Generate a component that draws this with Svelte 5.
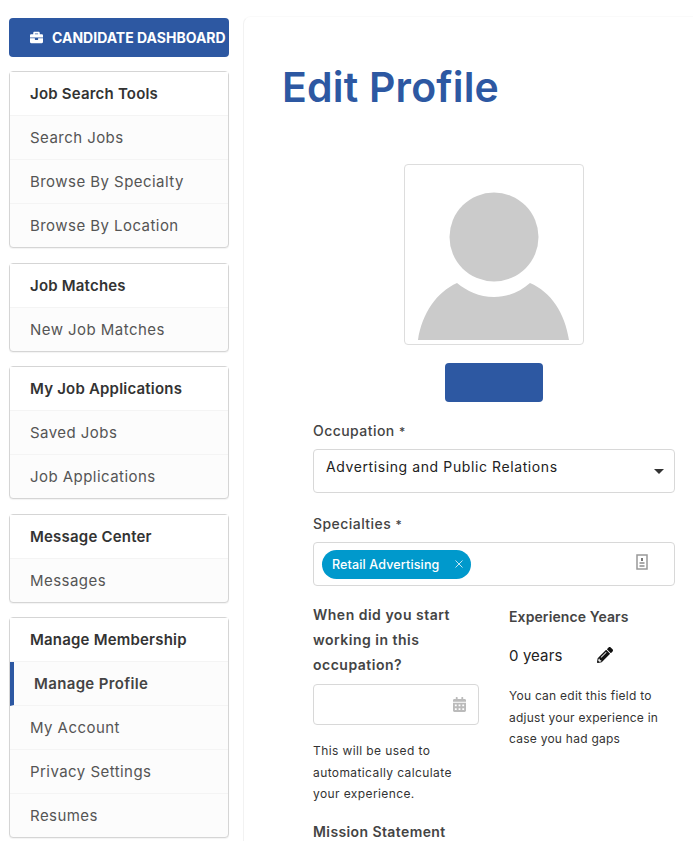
<script>
  const groups = [
    { title: "Job Search Tools", links: ["Search Jobs", "Browse By Specialty", "Browse By Location"] },
    { title: "Job Matches", links: ["New Job Matches"] },
    { title: "My Job Applications", links: ["Saved Jobs", "Job Applications"] },
    { title: "Message Center", links: ["Messages"] },
    { title: "Manage Membership", links: ["Manage Profile", "My Account", "Privacy Settings", "Resumes"] }
  ];
</script>

<div class="page">
  <aside class="sidebar">
    <a class="dash-btn" href="#dashboard">
      <svg class="case" viewBox="0 0 512 512" aria-hidden="true">
        <path fill="currentColor" d="M320 336c0 8.800-7.200 16-16 16h-96c-8.800 0-16-7.200-16-16v-48H0v144c0 25.600 22.400 48 48 48h416c25.600 0 48-22.400 48-48V288H320v48zm144-208h-80V80c0-25.600-22.400-48-48-48H176c-25.600 0-48 22.400-48 48v48H48c-25.600 0-48 22.400-48 48v80h512v-80c0-25.600-22.400-48-48-48zm-144 0H192V96h128v32z" />
      </svg>
      CANDIDATE DASHBOARD
    </a>

    {#each groups as group}
      <nav class="group">
        <div class="group-title">{group.title}</div>
        {#each group.links as link}
          <a class="link" class:active={link === "Manage Profile"} href="#link">{link}</a>
        {/each}
      </nav>
    {/each}
  </aside>

  <main class="content">
    <h1>Edit Profile</h1>

    <div class="photo-wrap">
      <div class="photo">
        <svg viewBox="0 0 178 178" width="178" height="178" aria-hidden="true">
          <circle cx="89" cy="72" r="44.500" fill="#cbcbcb" />
          <path fill="#cbcbcb" d="M13 175C17 148 32 127 52 118C62 126 74 132 89 132C104 132 116 126 125 118C146 127 160 148 164 175Z" />
        </svg>
      </div>
      <button class="upload" type="button" aria-label="Upload photo"></button>
    </div>

    <div class="form">
      <label class="label" for="occ">Occupation <span class="req">*</span></label>
      <div class="select" id="occ">
        <span>Advertising and Public Relations</span>
        <span class="caret"></span>
      </div>

      <div class="label spec-label">Specialties <span class="req">*</span></div>
      <div class="tags-input">
        <span class="chip">
          Retail Advertising
          <svg class="chip-x" viewBox="0 0 8 8" aria-hidden="true">
            <path fill="none" stroke="#c4e6f3" stroke-width="1" d="M0.500 0.500L7.500 7.500M7.500 0.500L0.500 7.500" />
          </svg>
        </span>
        <svg class="contact" viewBox="0 0 12 16" aria-hidden="true">
          <path fill="none" stroke="#999" stroke-width="1.500" d="M1 1h10v14H1z" />
          <path fill="#777" d="M5 4h2v3H5z" />
          <path fill="#aaa" d="M3.500 8h5v2h-5zM3.500 11h5v2h-5z" />
        </svg>
      </div>

      <div class="columns">
        <div class="col-left">
          <div class="q">When did you start working in this occupation?</div>
          <div class="date-input">
            <svg class="cal" viewBox="0 0 448 512" aria-hidden="true">
              <path fill="#bbb" d="M0 464c0 26.500 21.500 48 48 48h352c26.500 0 48-21.500 48-48V192H0v272zm320-196c0-6.600 5.400-12 12-12h40c6.600 0 12 5.400 12 12v40c0 6.600-5.400 12-12 12h-40c-6.600 0-12-5.400-12-12v-40zm0 128c0-6.600 5.400-12 12-12h40c6.600 0 12 5.400 12 12v40c0 6.600-5.400 12-12 12h-40c-6.600 0-12-5.400-12-12v-40zM192 268c0-6.600 5.400-12 12-12h40c6.600 0 12 5.400 12 12v40c0 6.600-5.400 12-12 12h-40c-6.600 0-12-5.400-12-12v-40zm0 128c0-6.600 5.400-12 12-12h40c6.600 0 12 5.400 12 12v40c0 6.600-5.400 12-12 12h-40c-6.600 0-12-5.400-12-12v-40zM64 268c0-6.600 5.400-12 12-12h40c6.600 0 12 5.400 12 12v40c0 6.600-5.400 12-12 12H76c-6.600 0-12-5.400-12-12v-40zm0 128c0-6.600 5.400-12 12-12h40c6.600 0 12 5.400 12 12v40c0 6.600-5.400 12-12 12H76c-6.600 0-12-5.400-12-12v-40zM400 64h-48V16c0-8.800-7.200-16-16-16h-32c-8.800 0-16 7.200-16 16v48H160V16c0-8.800-7.200-16-16-16h-32c-8.800 0-16 7.200-16 16v48H48C21.500 64 0 85.500 0 112v48h448v-48c0-26.500-21.500-48-48-48z" />
            </svg>
          </div>
          <p class="hint left-hint">This will be used to automatically calculate your experience.</p>
        </div>
        <div class="col-right">
          <div class="q exp">Experience Years</div>
          <div class="years">
            <span>0 years</span>
            <svg class="pencil" viewBox="0 0 512 512" aria-hidden="true">
              <path fill="#111" d="M497.900 142.100l-46.100 46.100c-4.700 4.700-12.300 4.700-17 0l-111-111c-4.700-4.700-4.700-12.300 0-17l46.100-46.100c18.700-18.700 49.100-18.700 67.900 0l60.100 60.100c18.800 18.700 18.800 49.100 0 67.900zM284.200 99.800L21.600 362.400.4 483.900c-2.900 16.400 11.400 30.600 27.800 27.800l121.500-21.300 262.600-262.600c4.700-4.700 4.700-12.300 0-17l-111-111c-4.800-4.700-12.400-4.700-17.100 0zM124.100 339.900c-5.500-5.500-5.500-14.300 0-19.800l154-154c5.500-5.500 14.300-5.500 19.800 0s5.500 14.300 0 19.800l-154 154c-5.500 5.500-14.300 5.500-19.800 0zM88 424h48v36.300l-64.500 11.300-31.100-31.100L51.700 376H88v48z" />
            </svg>
          </div>
          <p class="hint right-hint">You can edit this field to adjust your experience in case you had gaps</p>
        </div>
      </div>

      <div class="q mission">Mission Statement</div>
    </div>
  </main>
</div>

<style>
  :global(body) {
    margin: 0;
    background: #fff;
    font-family: "Inter", "Open Sans", sans-serif;
    color: #444;
  }

  .page {
    display: flex;
    height: 841px;
    overflow: hidden;
    padding-top: 18px;
    box-sizing: border-box;
  }

  .sidebar {
    width: 220px;
    margin-left: 9px;
    flex-shrink: 0;
  }

  .dash-btn {
    display: flex;
    align-items: center;
    height: 39px;
    padding-left: 21px;
    background: #2d58a2;
    border-radius: 4px;
    color: #fff;
    font-size: 14px;
    font-weight: 700;
    text-decoration: none;
    white-space: nowrap;
    margin-bottom: 14px;
  }

  .case {
    width: 13px;
    height: 13px;
    margin-right: 9px;
  }

  .group {
    display: flex;
    flex-direction: column;
    border: 1px solid #d5d5d5;
    border-radius: 4px;
    margin-bottom: 14.500px;
    background: #fcfcfc;
    box-shadow: 0 1px 1px rgba(0, 0, 0, 0.05);
  }

  .group-title {
    height: 44px;
    line-height: 44px;
    padding-left: 20px;
    font-size: 15px;
    font-weight: 600;
    letter-spacing: 0.200px;
    color: #333;
    background: #fff;
    border-bottom: 1px solid #f4f4f4;
    box-sizing: border-box;
  }

  .link {
    height: 44px;
    line-height: 43px;
    padding-left: 20px;
    font-size: 15px;
    color: #555;
    letter-spacing: 0.450px;
    text-decoration: none;
    border-bottom: 1px solid #f4f4f4;
    box-sizing: border-box;
  }

  .link:last-child {
    border-bottom: none;
    height: 43px;
  }

  .link.active {
    font-weight: 600;
    color: #444;
    letter-spacing: 0.350px;
    padding-left: 20px;
    border-left: 4px solid #2d58a2;
  }

  .content {
    flex: 1;
    margin-left: 14px;
    margin-top: -2px;
    padding-top: 2px;
    padding-left: 38px;
    border-left: 1px solid #f2f2f2;
    border-top: 1px solid #fafafa;
    border-top-left-radius: 8px;
    min-width: 0;
  }

  h1 {
    margin: 45px 0 0;
    font-size: 41px;
    line-height: 46px;
    font-weight: 600;
    letter-spacing: 0.200px;
    color: #2d58a2;
  }

  .photo-wrap {
    display: flex;
    flex-direction: column;
    align-items: center;
    width: 423px;
    margin-top: 54px;
  }

  .photo {
    width: 178px;
    height: 179px;
    border: 1px solid #ddd;
    border-radius: 4px;
  }

  .photo svg {
    display: block;
  }

  .upload {
    width: 98px;
    height: 39px;
    margin-top: 18px;
    border: none;
    border-radius: 4px;
    background: #2d58a2;
  }

  .form {
    margin-left: 31px;
    width: 362px;
    margin-top: 19px;
  }

  .label {
    display: block;
    font-size: 14px;
    font-weight: 500;
    line-height: 20px;
    letter-spacing: 0.450px;
    color: #444;
  }

  .req {
    font-size: 12px;
  }

  .select {
    display: flex;
    justify-content: space-between;
    align-items: flex-start;
    box-sizing: border-box;
    height: 44px;
    margin-top: 7px;
    padding: 7px 10px 0 12px;
    border: 1px solid #d8d8d8;
    border-radius: 4px;
    font-size: 14px;
    line-height: 20px;
    letter-spacing: 0.600px;
    color: #222;
  }

  .caret {
    margin-top: 12px;
    border-left: 5.500px solid transparent;
    border-right: 5.500px solid transparent;
    border-top: 5px solid #333;
  }

  .spec-label {
    margin-top: 21px;
  }

  .tags-input {
    display: flex;
    justify-content: space-between;
    align-items: center;
    box-sizing: border-box;
    height: 44px;
    margin-top: 7px;
    padding: 0 26px 0 8px;
    border: 1px solid #d8d8d8;
    border-radius: 4px;
  }

  .chip {
    display: inline-flex;
    align-items: center;
    justify-content: space-between;
    box-sizing: border-box;
    width: 149px;
    height: 29px;
    padding: 0 8px 0 10px;
    border-radius: 15px;
    background: #0099cc;
    color: #fff;
    font-size: 12.500px;
    font-weight: 500;
    letter-spacing: 0.150px;
  }

  .chip-x {
    width: 8px;
    height: 8px;
  }

  .contact {
    width: 12px;
    height: 16px;
    margin-bottom: 4px;
  }

  .columns {
    display: flex;
    margin-top: 16px;
  }

  .col-left {
    width: 166px;
  }

  .col-right {
    margin-left: 30px;
    width: 166px;
  }

  .q {
    font-size: 14px;
    font-weight: 600;
    line-height: 25px;
    letter-spacing: 0.500px;
    color: #444;
  }

  .exp {
    margin-top: 2px;
    letter-spacing: 0.100px;
  }

  .date-input {
    position: relative;
    box-sizing: border-box;
    height: 41px;
    margin-top: 7px;
    border: 1px solid #d8d8d8;
    border-radius: 4px;
  }

  .cal {
    position: absolute;
    right: 12px;
    top: 12px;
    width: 13px;
    height: 15px;
  }

  .hint {
    margin: 0;
    font-size: 12px;
    line-height: 21.500px;
    color: #333;
  }

  .left-hint {
    margin-top: 15px;
    letter-spacing: 0.400px;
  }

  .right-hint {
    letter-spacing: 0.250px;
  }

  .years {
    display: flex;
    align-items: center;
    margin-top: 14px;
    font-size: 15px;
    letter-spacing: 0.100px;
    color: #222;
    height: 24px;
    margin-bottom: 18px;
  }

  .pencil {
    width: 16px;
    height: 16px;
    margin-left: 35px;
    margin-top: -1px;
  }

  .mission {
    margin-top: 14px;
    letter-spacing: 0.400px;
  }
</style>
